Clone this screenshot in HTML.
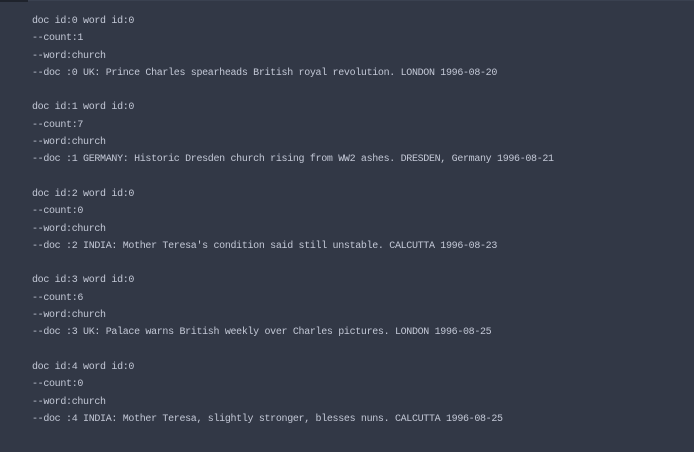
<!DOCTYPE html>
<html><head><meta charset="utf-8"><style>
html,body{margin:0;padding:0;width:694px;height:452px;background:#323846;overflow:hidden}
.top{position:absolute;left:0;top:0;width:28px;height:2px;background:#1f232c}
.top2{position:absolute;left:28px;top:0;right:0;height:1px;background:#3a4150}
pre{position:absolute;left:32px;top:13px;margin:0;font-family:"Liberation Mono",monospace;font-size:10px;letter-spacing:-0.33px;line-height:17.3px;color:#c3c8d6}
</style></head><body><div class="top"></div><div class="top2"></div>
<pre>doc id:0 word id:0
--count:1
--word:church
--doc :0 UK: Prince Charles spearheads British royal revolution. LONDON 1996-08-20

doc id:1 word id:0
--count:7
--word:church
--doc :1 GERMANY: Historic Dresden church rising from WW2 ashes. DRESDEN, Germany 1996-08-21

doc id:2 word id:0
--count:0
--word:church
--doc :2 INDIA: Mother Teresa's condition said still unstable. CALCUTTA 1996-08-23

doc id:3 word id:0
--count:6
--word:church
--doc :3 UK: Palace warns British weekly over Charles pictures. LONDON 1996-08-25

doc id:4 word id:0
--count:0
--word:church
--doc :4 INDIA: Mother Teresa, slightly stronger, blesses nuns. CALCUTTA 1996-08-25</pre>
</body></html>
